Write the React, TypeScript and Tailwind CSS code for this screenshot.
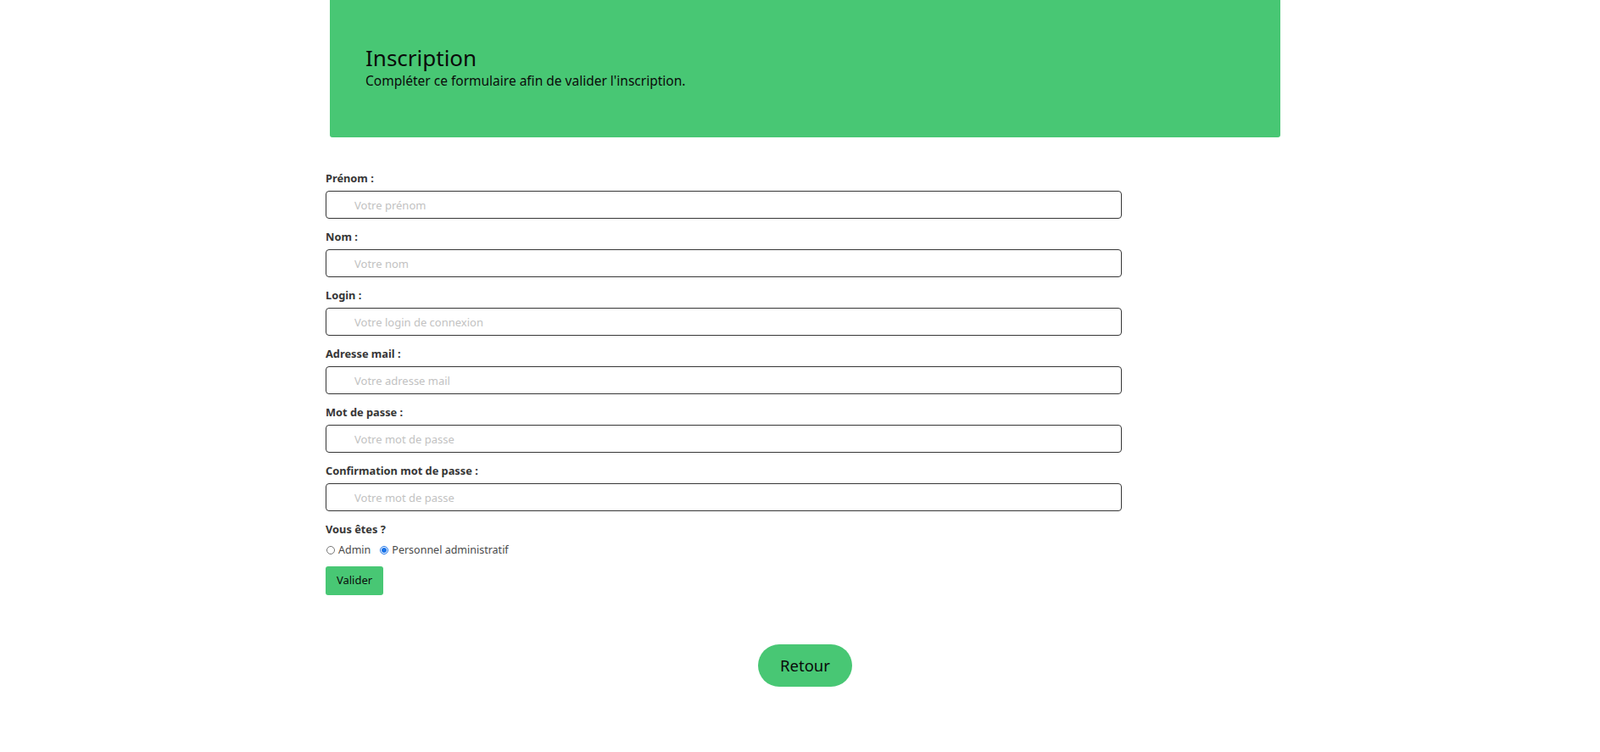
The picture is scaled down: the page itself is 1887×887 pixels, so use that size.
import { useState } from "react";

const fields = [
  { key: "prenom", label: "Prénom :", placeholder: "Votre prénom", type: "text" },
  { key: "nom", label: "Nom :", placeholder: "Votre nom", type: "text" },
  { key: "login", label: "Login :", placeholder: "Votre login de connexion", type: "text" },
  { key: "mail", label: "Adresse mail :", placeholder: "Votre adresse mail", type: "email" },
  { key: "mdp", label: "Mot de passe :", placeholder: "Votre mot de passe", type: "password" },
  { key: "mdp2", label: "Confirmation mot de passe :", placeholder: "Votre mot de passe", type: "password" },
];

export default function App() {
  const [role, setRole] = useState("personnel");

  return (
    <div
      className="min-h-screen bg-white text-[#363636]"
      style={{ fontFamily: '"Noto Sans", "Open Sans", sans-serif' }}
    >
      <div className="w-[1133px] mx-auto">
        <section className="ml-[12px] h-[162px] bg-[#48c774] rounded-b-[3px] pl-[42px] pt-[51px]">
          <h1 className="text-[26px] leading-[34px] text-[#0a0a0a]">Inscription</h1>
          <p className="text-[15.5px] leading-[20px] text-[#0a0a0a]">
            Compléter ce formulaire afin de valider l'inscription.
          </p>
        </section>

        <form className="pl-[7px] w-[946px] mt-[38px]" onSubmit={(e) => e.preventDefault()}>
          {fields.map((f) => (
            <div key={f.key} className="mb-[11px]">
              <label className="block text-[12.8px] leading-[20px] font-bold mb-[5px]">{f.label}</label>
              <input
                type={f.type}
                placeholder={f.placeholder}
                className="block w-full h-[33px] border border-[#363636] rounded-[4px] pl-[33px] text-[13px] placeholder:text-[#c2c2c2] outline-none"
              />
            </div>
          ))}

          <label className="block text-[12.8px] leading-[20px] font-bold mb-[5px]">Vous êtes ?</label>
          <div className="flex items-center h-[20px] text-[12.5px] text-[#4a4a4a]">
            <label className="flex items-center">
              <input
                type="radio"
                name="role"
                checked={role === "admin"}
                onChange={() => setRole("admin")}
                className="w-[10px] h-[10px] m-0 ml-[1px] mr-[4px] accent-[#1a73e8]"
              />
              Admin
            </label>
            <label className="flex items-center ml-[11px]">
              <input
                type="radio"
                name="role"
                checked={role === "personnel"}
                onChange={() => setRole("personnel")}
                className="w-[10px] h-[10px] m-0 mr-[4px] accent-[#1a73e8]"
              />
              Personnel administratif
            </label>
          </div>

          <button
            type="submit"
            className="mt-[9px] h-[34px] w-[68px] bg-[#48c774] rounded-[3px] text-[13px] text-[#0a0a0a]"
          >
            Valider
          </button>
        </form>

        <div className="ml-[12px] flex justify-center mt-[58px]">
          <button className="h-[50px] w-[111px] rounded-full bg-[#48c774] text-[18.5px] text-[#0a0a0a]">
            Retour
          </button>
        </div>
      </div>
    </div>
  );
}
